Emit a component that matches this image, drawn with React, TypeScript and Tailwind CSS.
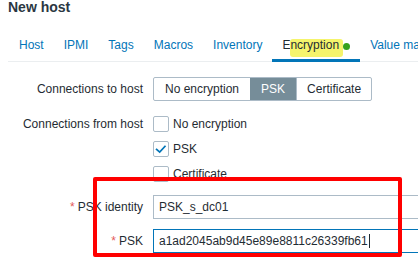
const TABS = ["Host", "IPMI", "Tags", "Macros", "Inventory"];

function Checkbox({ checked, label }: { checked?: boolean; label: string }) {
  return (
    <div className="flex h-4 items-center">
      <span className="flex h-4 w-4 items-center justify-center rounded-[2px] border border-[#acbbc7] bg-white">
        {checked && (
          <svg viewBox="0 0 16 16" width="16" height="16" fill="none" stroke="#0275b8" strokeWidth="2">
            <path d="M3 8.5L6.5 11.5L12.5 5" strokeLinecap="square" />
          </svg>
        )}
      </span>
      <span className="ml-[4px] leading-4">{label}</span>
    </div>
  );
}

export default function App() {
  return (
    <div className="relative h-[262px] w-[418px] overflow-hidden bg-white font-['Liberation_Sans',Arial,sans-serif] text-[12px] text-[#1f2c33]">
      {/* Header */}
      <h1 className="-mt-px ml-2 text-[14px] font-bold leading-4 text-[#2b3742]">New host</h1>

      {/* Tabs */}
      <div className="ml-2 mt-4 flex w-[600px] border-b border-[#ebeef0] pl-px">
        {TABS.map((t) => (
          <div key={t} className="-mb-px flex h-[31px] shrink-0 items-start border-b-[3px] border-transparent px-[10px] pt-[7px] leading-[14px] text-[#0275b8]">
            {t}
          </div>
        ))}
        <div className="-mb-px flex h-[31px] shrink-0 items-start border-b-[3px] border-[#0275b8] px-[10px] pt-[7px] leading-[14px] text-[#1f2c33]">
          E
          <span className="relative">
            <span className="absolute left-0 top-px h-[18px] w-[53px] rounded-[3px] bg-[#f5f46c]" />
            <span className="relative">ncryption</span>
          </span>
          <span className="relative ml-[4px] mt-[5px] h-[7px] w-[7px] rounded-full bg-[#34a11c]" />
        </div>
        <div className="-mb-px flex h-[31px] shrink-0 items-start whitespace-nowrap border-b-[3px] border-transparent px-[10px] pt-[7px] leading-[14px] text-[#0275b8]">
          Value mapping
        </div>
      </div>

      {/* Form */}
      <div className="pt-[15px]">
        <div className="flex h-6 items-center">
          <div className="w-[143px] shrink-0 text-right">Connections to host</div>
          <div className="ml-[10px] flex h-6 overflow-hidden rounded-[2px] border border-[#acbbc7]">
            <span className="flex items-center px-[11px]">No encryption</span>
            <span className="-my-px flex items-center bg-[#768d99] px-[11px] text-white">PSK</span>
            <span className="flex items-center border-l border-[#acbbc7] px-[10px]">Certificate</span>
          </div>
        </div>

        <div className="mt-[15px] flex items-start">
          <div className="w-[143px] shrink-0 text-right leading-4">Connections from host</div>
          <div className="ml-[10px] flex flex-col gap-[9px]">
            <Checkbox label="No encryption" />
            <Checkbox checked label="PSK" />
            <Checkbox label="Certificate" />
          </div>
        </div>

        <div className="mt-[13px] flex h-6 items-center">
          <div className="w-[143px] shrink-0 text-right">
            <span className="mr-[3px] text-[#e45959]">*</span>PSK identity
          </div>
          <div className="ml-[10px] flex h-6 w-[300px] shrink-0 items-center border border-[#acbbc7] px-[5px]">
            PSK_s_dc01
          </div>
        </div>

        <div className="mt-[10px] flex h-6 items-center">
          <div className="w-[143px] shrink-0 text-right">
            <span className="mr-[3px] text-[#e45959]">*</span>PSK
          </div>
          <div className="ml-[10px] flex h-6 w-[300px] shrink-0 items-center border border-[#0275b8] px-[5px]">
            a1ad2045ab9d45e89e8811c26339fb61
            <span className="ml-px h-[14px] w-px bg-[#1f2c33]" />
          </div>
        </div>
      </div>

      {/* Red annotation box */}
      <div className="pointer-events-none absolute left-[93px] top-[177px] h-[80px] w-[309px] rounded-[2px] border-[4px] border-[#ff0000]" />
    </div>
  );
}
